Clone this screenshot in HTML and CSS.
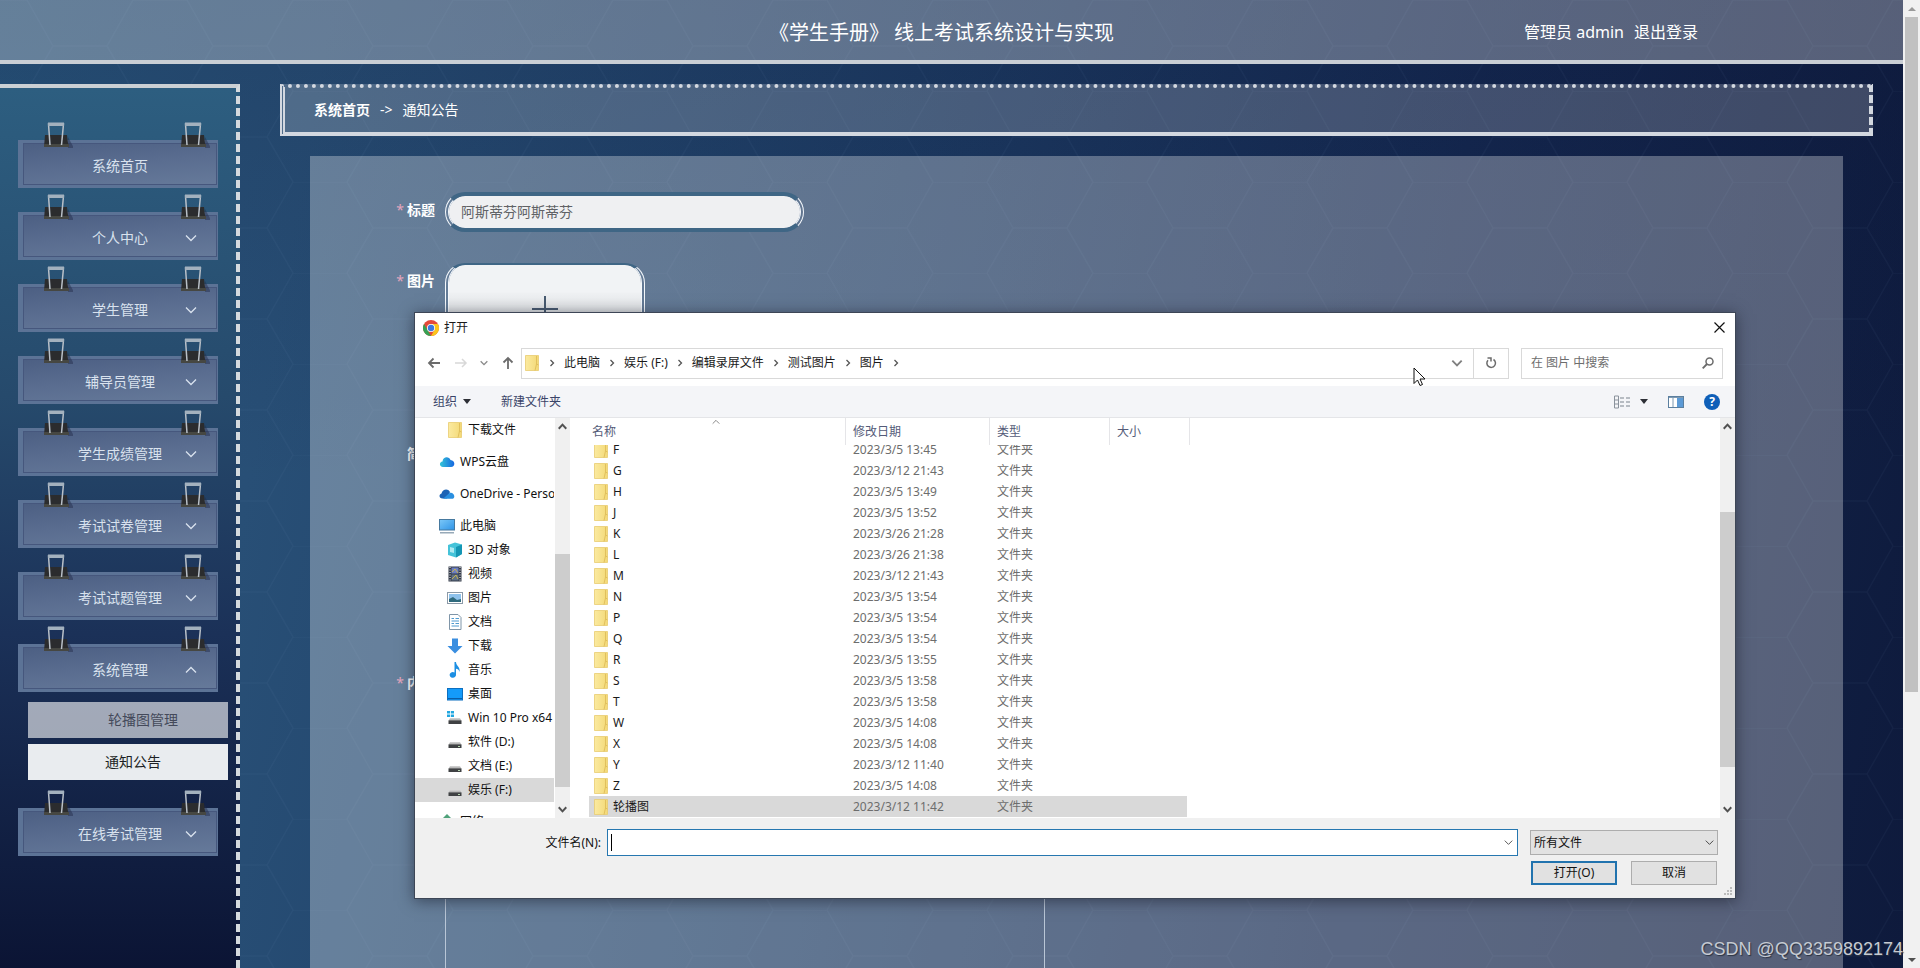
FILE: index.html
```html
<!DOCTYPE html>
<html lang="zh-CN">
<head>
<meta charset="utf-8">
<title>《学生手册》 线上考试系统设计与实现</title>
<link rel="stylesheet" href="styles.css">
</head>
<body>
<svg class="sprite" aria-hidden="true">
  <defs>
    <linearGradient id="g-folder" x1="0" y1="0" x2="1" y2="0"><stop offset="0" stop-color="#fbeaa0"/><stop offset="1" stop-color="#f3d977"/></linearGradient>
    <linearGradient id="g-screen" x1="0" y1="0" x2="1" y2="1"><stop offset="0" stop-color="#7cc8f8"/><stop offset="1" stop-color="#2e93e6"/></linearGradient>
    <linearGradient id="g-cloud" x1="0" y1="0" x2="1" y2="0"><stop offset="0" stop-color="#35c5d8"/><stop offset="1" stop-color="#1667e0"/></linearGradient>
    <linearGradient id="g-drive" x1="0" y1="0" x2="0" y2="1"><stop offset="0" stop-color="#d8d8d8"/><stop offset="1" stop-color="#9a9a9a"/></linearGradient>
    <symbol id="clip" viewBox="0 0 30 28">
      <path d="M25 16 L31 27 H25 Z" fill="#222a48" opacity=".45"/>
      <path d="M2 14 H24 L25.500 26 H1 Z" fill="#2b2c2e"/>
      <path d="M1 23 H26 V26 H1 Z" fill="#464742"/>
      <path d="M7 24 L5.500 3 H20.500 L18.500 24" fill="none" stroke="#b9c0c8" stroke-width="1.500"/>
      <path d="M5 1.500 H21 V5 H5 Z" fill="#a3b1be"/>
    </symbol>
    <symbol id="folder" viewBox="0 0 16 16">
      <path d="M1.500 .5 H14.500 V15.500 H1.500 Z" fill="url(#g-folder)" stroke="#e8cc70" stroke-width=".8"/>
      <path d="M12.500 9 L11 15.500 M12.500 1 V9 L14.500 10" fill="none" stroke="#dcb954" stroke-width=".8"/>
    </symbol>
    <symbol id="wps" viewBox="0 0 16 16"><path d="M4 13 C0 13 0 8 3.500 7.500 C4 2.500 10 2 11.500 6 C16.500 6.500 16.500 13 12 13 Z" fill="url(#g-cloud)"/></symbol>
    <symbol id="onedrive" viewBox="0 0 16 16">
      <path d="M3.500 12.500 C0 12.500 -.5 8.500 2.500 7.500 C3.500 3 9 2 11 6 L8 12.500 Z" fill="#1b62b5"/>
      <path d="M4 12.800 L10.500 7 C15 5.500 17.500 12.800 12.500 12.800 Z" fill="#2a8fe0"/>
    </symbol>
    <symbol id="pc" viewBox="0 0 16 16"><rect x=".5" y="1.500" width="15" height="10.500" fill="url(#g-screen)" stroke="#46799f"/><path d="M1 14.800 H15" stroke="#7d94a6" stroke-width="1.200"/></symbol>
    <symbol id="cube" viewBox="0 0 16 16"><path d="M1 3 L8 .5 L15 2.500 V12 L9 15.500 L1 13 Z" fill="#45c3d9"/><path d="M9 5 L15 2.500 V12 L9 15.500 Z" fill="#1596b4"/><path d="M3 5 L7 6 V11 L3 10 Z" fill="#aeeaf2"/></symbol>
    <symbol id="film" viewBox="0 0 16 16"><rect x="1.500" y=".5" width="13" height="15" fill="#333a48"/><rect x="4.500" y="1.500" width="7" height="6" fill="#6d7fc0"/><rect x="4.500" y="8.500" width="7" height="6" fill="#5f7086"/><path d="M5 6 L8 3 L11 7 M5 13 L9 9 L11 13" stroke="#c6b250" fill="none"/><path d="M3 1 V15 M13 1 V15" stroke="#fff" stroke-width="1" stroke-dasharray="1 1.500"/></symbol>
    <symbol id="image" viewBox="0 0 16 16"><rect x=".5" y="2.500" width="15" height="11" fill="#fff" stroke="#8b9aa8"/><rect x="2" y="4" width="12" height="8" fill="#8ec2ec"/><path d="M2 9 L6 7 L10 10 L14 9 V12 H2 Z" fill="#2f6a7d"/></symbol>
    <symbol id="doc" viewBox="0 0 16 16"><path d="M2.500 .5 H11 L14 3.500 V15.500 H2.500 Z" fill="#fff" stroke="#7f95a8"/><path d="M4.500 4.500 H7 M8.500 4.500 H12 M4.500 7 H12 M4.500 9.500 H7 M8.500 9.500 H12 M4.500 12 H12" stroke="#4e9ad0"/></symbol>
    <symbol id="down" viewBox="0 0 16 16"><path d="M5 .5 H11 V8 H15.500 L8 15.500 L.5 8 H5 Z" fill="#3a8ee0"/></symbol>
    <symbol id="note" viewBox="0 0 16 16"><path d="M7.500 0 H9 C9 4 13.500 4.500 12.500 10 C12 7.500 10.500 7 9 6.800 V12.500 A3.200 2.800 0 1 1 7.500 10.500 Z" fill="#1c8fe3"/></symbol>
    <symbol id="desk" viewBox="0 0 16 16"><rect x=".5" y="2.500" width="15" height="11.500" fill="#149bfa" stroke="#0c6fc0"/><path d="M1 12.500 H15" stroke="#0b5ea8"/></symbol>
    <symbol id="drive" viewBox="0 0 16 16"><path d="M3 8 H13 L14.500 11 H1.500 Z" fill="url(#g-drive)"/><rect x="1.500" y="10.500" width="13" height="3.500" fill="#3f4143"/><rect x="11" y="12" width="2" height="1" fill="#b8d8b0"/></symbol>
    <symbol id="win" viewBox="0 0 16 16"><path d="M0 1 H3 V3.500 H0 Z M3.800 1 H7 V3.500 H3.800 Z M0 4.500 H3 V7 H0 Z M3.800 4.500 H7 V7 H3.800 Z" fill="#22a7e0"/><path d="M3 8 H13 L14.500 11 H1.500 Z" fill="url(#g-drive)"/><rect x="1.500" y="10.500" width="13" height="3.500" fill="#3f4143"/></symbol>
    <symbol id="net" viewBox="0 0 16 16"><path d="M8 0 L13 5 H3 Z" fill="#4fa27a"/><rect x="1" y="5" width="14" height="9" fill="#4a9ad8"/></symbol>
    <symbol id="chev-down" viewBox="0 0 12 12"><path d="M1 3.500 L6 8.500 L11 3.500" fill="none" stroke="currentColor" stroke-width="1.300"/></symbol>
    <symbol id="chev-up" viewBox="0 0 12 12"><path d="M1 8.500 L6 3.500 L11 8.500" fill="none" stroke="currentColor" stroke-width="1.300"/></symbol>
    <symbol id="bold-down" viewBox="0 0 12 12"><path d="M1 3 L6 8.500 L11 3" fill="none" stroke="currentColor" stroke-width="2.600"/></symbol>
    <symbol id="bold-up" viewBox="0 0 12 12"><path d="M1 9 L6 3.500 L11 9" fill="none" stroke="currentColor" stroke-width="2.600"/></symbol>
    <symbol id="chev-right" viewBox="0 0 12 12"><path d="M4.500 3 L7.500 6 L4.500 9" fill="none" stroke="currentColor" stroke-width="1.300"/></symbol>
    <pattern id="hex" width="160" height="91" patternUnits="userSpaceOnUse">
      <path d="M53 46 H107 L133 0 H160 M107 46 L133 91 M53 46 L27 0 H0 M53 46 L27 91" fill="none" stroke="#9fc0e8" stroke-width="1.500"/>
    </pattern>
  </defs>
</svg>

<div class="page">
  <svg class="hexes" aria-hidden="true"><rect width="100%" height="100%" fill="url(#hex)"/></svg>

  <header class="topbar">
    <h1 class="topbar-title">《学生手册》 线上考试系统设计与实现</h1>
    <div class="topbar-user"><span>管理员 admin</span><a class="logout" href="#">退出登录</a></div>
  </header>

  <div class="layout">
    <nav class="sidebar">
      <button class="menu-item"><svg class="clip clip-left"><use href="#clip"/></svg><svg class="clip clip-right"><use href="#clip"/></svg>系统首页</button>
      <button class="menu-item"><svg class="clip clip-left"><use href="#clip"/></svg><svg class="clip clip-right"><use href="#clip"/></svg>个人中心<svg class="caret"><use href="#chev-down"/></svg></button>
      <button class="menu-item"><svg class="clip clip-left"><use href="#clip"/></svg><svg class="clip clip-right"><use href="#clip"/></svg>学生管理<svg class="caret"><use href="#chev-down"/></svg></button>
      <button class="menu-item"><svg class="clip clip-left"><use href="#clip"/></svg><svg class="clip clip-right"><use href="#clip"/></svg>辅导员管理<svg class="caret"><use href="#chev-down"/></svg></button>
      <button class="menu-item"><svg class="clip clip-left"><use href="#clip"/></svg><svg class="clip clip-right"><use href="#clip"/></svg>学生成绩管理<svg class="caret"><use href="#chev-down"/></svg></button>
      <button class="menu-item"><svg class="clip clip-left"><use href="#clip"/></svg><svg class="clip clip-right"><use href="#clip"/></svg>考试试卷管理<svg class="caret"><use href="#chev-down"/></svg></button>
      <button class="menu-item"><svg class="clip clip-left"><use href="#clip"/></svg><svg class="clip clip-right"><use href="#clip"/></svg>考试试题管理<svg class="caret"><use href="#chev-down"/></svg></button>
      <button class="menu-item"><svg class="clip clip-left"><use href="#clip"/></svg><svg class="clip clip-right"><use href="#clip"/></svg>系统管理<svg class="caret"><use href="#chev-up"/></svg></button>
      <div class="submenu">
        <a class="submenu-item" href="#">轮播图管理</a>
        <a class="submenu-item is-active" href="#">通知公告</a>
      </div>
      <button class="menu-item"><svg class="clip clip-left"><use href="#clip"/></svg><svg class="clip clip-right"><use href="#clip"/></svg>在线考试管理<svg class="caret"><use href="#chev-down"/></svg></button>
    </nav>

    <main class="content">
      <div class="crumbs"><a class="crumb-home" href="#">系统首页</a><span>-&gt;</span><span>通知公告</span></div>
      <form class="panel">
        <div class="row"><label class="row-label is-required" for="title">标题</label><input class="title-input" id="title" type="text" value="阿斯蒂芬阿斯蒂芬"></div>
        <div class="row row-image"><span class="row-label is-required">图片</span><button class="upload" type="button" aria-label="上传图片"><svg class="plus" viewBox="0 0 28 28"><path d="M14 1 V27 M1 14 H27" stroke="#475a70" stroke-width="2"/></svg></button></div>
        <div class="row row-brief"><span class="row-label">简介</span></div>
        <div class="row row-body"><span class="row-label is-required">内容</span><div class="editor"></div></div>
      </form>
    </main>
  </div>
</div>

<div class="page-scroll"><span class="arrow arrow-up"></span><span class="page-thumb"></span><span class="arrow arrow-down"></span></div>

<section class="dialog">
  <div class="titlebar">
    <svg class="chrome" viewBox="0 0 16 16"><circle cx="8" cy="8" r="8" fill="#e5493a"/><path d="M1.070 4 L4.540 10 L8 16 A8 8 0 0 1 1.070 4 Z" fill="#35a154"/><path d="M8 16 L11.460 10 L8 4 H14.930 A8 8 0 0 1 8 16 Z" fill="#fbc51c"/><circle cx="8" cy="8" r="4" fill="#fff"/><circle cx="8" cy="8" r="3.200" fill="#3c78e0"/></svg>
    <span>打开</span>
    <button class="close" aria-label="关闭"><svg class="ico11" viewBox="0 0 11 11"><path d="M.5 .5 L10.500 10.500 M10.500 .5 L.5 10.500" stroke="#111" stroke-width="1.200"/></svg></button>
  </div>

  <div class="addressrow">
    <div class="history">
      <svg class="ico14" viewBox="0 0 14 14"><path d="M13 7 H2 M6.500 2.500 L2 7 L6.500 11.500" fill="none" stroke="#6b6b6b" stroke-width="1.800"/></svg>
      <svg class="ico14" viewBox="0 0 14 14"><path d="M1 7 H12 M8 3 L12 7 L8 11" fill="none" stroke="#d8d8d8" stroke-width="1.500"/></svg>
      <svg class="ico8" viewBox="0 0 12 12"><path d="M1 3.500 L6 8.500 L11 3.500" fill="none" stroke="#8a8a8a" stroke-width="2"/></svg>
      <svg class="ico14" viewBox="0 0 14 14"><path d="M7 13 V2 M2.500 6.500 L7 2 L11.500 6.500" fill="none" stroke="#6b6b6b" stroke-width="1.800"/></svg>
    </div>
    <div class="address">
      <svg class="ico16"><use href="#folder"/></svg>
      <svg class="sep"><use href="#chev-right"/></svg><span>此电脑</span>
      <svg class="sep"><use href="#chev-right"/></svg><span>娱乐 (F:)</span>
      <svg class="sep"><use href="#chev-right"/></svg><span>编辑录屏文件</span>
      <svg class="sep"><use href="#chev-right"/></svg><span>测试图片</span>
      <svg class="sep"><use href="#chev-right"/></svg><span>图片</span>
      <svg class="sep"><use href="#chev-right"/></svg>
      <svg class="address-drop" viewBox="0 0 12 12"><path d="M2 4 L6 8 L10 4" fill="none" stroke="#808080" stroke-width="1.600"/></svg>
      <button class="refresh" aria-label="刷新"><svg class="ico12" viewBox="0 0 12 12"><path d="M8.500 2.500 A4.300 4.300 0 1 1 3 3.200" fill="none" stroke="#6b6b6b" stroke-width="1.500"/><path d="M2.500 1 H6 V4.500" fill="none" stroke="#6b6b6b" stroke-width="1.500"/></svg></button>
    </div>
    <div class="search">
      <input class="search-input" type="text" placeholder="在 图片 中搜索" aria-label="搜索">
      <svg class="ico12" viewBox="0 0 12 12"><circle cx="7.500" cy="4.500" r="3.500" fill="none" stroke="#6b6b6b" stroke-width="1.500"/><path d="M5 7 L.7 11.300" stroke="#6b6b6b" stroke-width="1.800"/></svg>
    </div>
  </div>

  <div class="toolbar">
    <button class="tool">组织<span class="tri"></span></button>
    <button class="tool">新建文件夹</button>
    <div class="tool-right">
      <button class="tool tool-view" aria-label="视图"><svg class="ico16" viewBox="0 0 16 14"><path d="M.5 1 H4.500 V13 H.5 Z M.5 5 H4.500 M.5 9 H4.500" fill="none" stroke="#8a929c"/><path d="M6 3 H10 M12 3 H16 M6 7 H10 M12 7 H16 M6 11 H10 M12 11 H16" stroke="#7b838d"/></svg><span class="tri"></span></button>
      <button class="tool" aria-label="预览窗格"><svg class="ico16" viewBox="0 0 16 14"><rect x=".5" y="1.500" width="15" height="11" fill="#fff" stroke="#5b7f9f"/><rect x="9" y="2" width="6" height="10" fill="#5c9ad6"/><path d="M1 2.500 H15 M5 2 V12" stroke="#7f9ab2"/></svg></button>
      <button class="help" aria-label="帮助">?</button>
    </div>
  </div>

  <div class="browser">
    <ul class="tree">
      <li class="leaf child"><svg class="ico16"><use href="#folder"/></svg>下载文件</li>
      <li class="leaf root"><svg class="ico16"><use href="#wps"/></svg>WPS云盘</li>
      <li class="leaf root"><svg class="ico16"><use href="#onedrive"/></svg>OneDrive - Personal</li>
      <li class="leaf root"><svg class="ico16"><use href="#pc"/></svg>此电脑</li>
      <li class="leaf child"><svg class="ico16"><use href="#cube"/></svg>3D 对象</li>
      <li class="leaf child"><svg class="ico16"><use href="#film"/></svg>视频</li>
      <li class="leaf child"><svg class="ico16"><use href="#image"/></svg>图片</li>
      <li class="leaf child"><svg class="ico16"><use href="#doc"/></svg>文档</li>
      <li class="leaf child"><svg class="ico16"><use href="#down"/></svg>下载</li>
      <li class="leaf child"><svg class="ico16"><use href="#note"/></svg>音乐</li>
      <li class="leaf child"><svg class="ico16"><use href="#desk"/></svg>桌面</li>
      <li class="leaf child"><svg class="ico16"><use href="#win"/></svg>Win 10 Pro x64 (C:)</li>
      <li class="leaf child"><svg class="ico16"><use href="#drive"/></svg>软件 (D:)</li>
      <li class="leaf child"><svg class="ico16"><use href="#drive"/></svg>文档 (E:)</li>
      <li class="leaf child is-selected"><svg class="ico16"><use href="#drive"/></svg>娱乐 (F:)</li>
      <li class="leaf root"><svg class="ico16"><use href="#net"/></svg>网络</li>
    </ul>
    <div class="scroll"><svg class="scroll-arrow"><use href="#bold-up"/></svg><span class="tree-thumb"></span><svg class="scroll-arrow"><use href="#bold-down"/></svg></div>

    <table class="files">
      <thead><tr><th>名称<svg class="sort"><use href="#chev-up"/></svg></th><th>修改日期</th><th>类型</th><th>大小</th></tr></thead>
      <tbody>
        <tr><td><svg class="ico16"><use href="#folder"/></svg>F</td><td>2023/3/5 13:45</td><td>文件夹</td><td></td></tr>
        <tr><td><svg class="ico16"><use href="#folder"/></svg>G</td><td>2023/3/12 21:43</td><td>文件夹</td><td></td></tr>
        <tr><td><svg class="ico16"><use href="#folder"/></svg>H</td><td>2023/3/5 13:49</td><td>文件夹</td><td></td></tr>
        <tr><td><svg class="ico16"><use href="#folder"/></svg>J</td><td>2023/3/5 13:52</td><td>文件夹</td><td></td></tr>
        <tr><td><svg class="ico16"><use href="#folder"/></svg>K</td><td>2023/3/26 21:28</td><td>文件夹</td><td></td></tr>
        <tr><td><svg class="ico16"><use href="#folder"/></svg>L</td><td>2023/3/26 21:38</td><td>文件夹</td><td></td></tr>
        <tr><td><svg class="ico16"><use href="#folder"/></svg>M</td><td>2023/3/12 21:43</td><td>文件夹</td><td></td></tr>
        <tr><td><svg class="ico16"><use href="#folder"/></svg>N</td><td>2023/3/5 13:54</td><td>文件夹</td><td></td></tr>
        <tr><td><svg class="ico16"><use href="#folder"/></svg>P</td><td>2023/3/5 13:54</td><td>文件夹</td><td></td></tr>
        <tr><td><svg class="ico16"><use href="#folder"/></svg>Q</td><td>2023/3/5 13:54</td><td>文件夹</td><td></td></tr>
        <tr><td><svg class="ico16"><use href="#folder"/></svg>R</td><td>2023/3/5 13:55</td><td>文件夹</td><td></td></tr>
        <tr><td><svg class="ico16"><use href="#folder"/></svg>S</td><td>2023/3/5 13:58</td><td>文件夹</td><td></td></tr>
        <tr><td><svg class="ico16"><use href="#folder"/></svg>T</td><td>2023/3/5 13:58</td><td>文件夹</td><td></td></tr>
        <tr><td><svg class="ico16"><use href="#folder"/></svg>W</td><td>2023/3/5 14:08</td><td>文件夹</td><td></td></tr>
        <tr><td><svg class="ico16"><use href="#folder"/></svg>X</td><td>2023/3/5 14:08</td><td>文件夹</td><td></td></tr>
        <tr><td><svg class="ico16"><use href="#folder"/></svg>Y</td><td>2023/3/12 11:40</td><td>文件夹</td><td></td></tr>
        <tr><td><svg class="ico16"><use href="#folder"/></svg>Z</td><td>2023/3/5 14:08</td><td>文件夹</td><td></td></tr>
        <tr class="is-selected"><td><svg class="ico16"><use href="#folder"/></svg>轮播图</td><td>2023/3/12 11:42</td><td>文件夹</td><td></td></tr>
      </tbody>
    </table>
    <div class="scroll"><svg class="scroll-arrow"><use href="#bold-up"/></svg><span class="list-thumb"></span><svg class="scroll-arrow"><use href="#bold-down"/></svg></div>
  </div>

  <div class="footer">
    <div class="footer-row">
      <label class="name-label" for="filename">文件名(N):</label>
      <div class="name-box"><input class="name-input" id="filename" type="text"><span class="text-caret"></span><svg class="ico9"><use href="#chev-down"/></svg></div>
      <div class="type-box"><select class="type-select" aria-label="文件类型"><option>所有文件</option></select><svg class="ico9 type-caret"><use href="#chev-down"/></svg></div>
    </div>
    <div class="footer-row footer-actions"><button class="btn btn-primary">打开(O)</button><button class="btn">取消</button></div>
    <svg class="grip" viewBox="0 0 9 9"><path d="M6 0 H8 V2 H6 Z M3 3 H5 V5 H3 Z M6 3 H8 V5 H6 Z M0 6 H2 V8 H0 Z M3 6 H5 V8 H3 Z M6 6 H8 V8 H6 Z" fill="#bcbcbc"/></svg>
  </div>
</section>

<svg class="pointer" viewBox="0 0 13 20"><path d="M1 1 V16.500 L4.500 13 L7 18.500 L9.500 17.500 L7 12 H12 Z" fill="#fff" stroke="#111"/></svg>
<div class="watermark">CSDN @QQ3359892174</div>
</body>
</html>
```
FILE: styles.css
```css
* { box-sizing: border-box; }

body {
  margin: 0;
  height: 100vh;
  display: flex;
  overflow: hidden;
  position: relative;
  font: 14px/20px "Noto Sans", "Noto Sans CJK SC", sans-serif;
  color: #fff;
}

button, input, select { font: inherit; color: inherit; margin: 0; padding: 0; border: 0; background: none; border-radius: 0; outline: 0; }
a { color: inherit; text-decoration: none; }
svg { flex: none; display: block; }

.sprite { position: absolute; width: 0; height: 0; }

/* page */
.page {
  flex: 1;
  min-width: 0;
  display: flex;
  flex-direction: column;
  position: relative;
  overflow: hidden;
  background:
    linear-gradient(180deg, rgba(10, 16, 48, .18) 0%, rgba(10, 16, 48, 0) 50%),
    linear-gradient(100deg, #28557c 0%, #284f76 16%, #1d3c64 45%, #142850 72%, #0e1a3c 100%);
}
.hexes { position: absolute; inset: 0; width: 100%; height: 100%; opacity: .04; }

.topbar {
  position: relative;
  display: flex;
  align-items: center;
  justify-content: center;
  height: 64px;
  padding-top: 6px;
  border-bottom: 4px solid #cacfd5;
  background: rgba(255, 255, 255, .3);
}
.topbar-title { margin: 0; padding-right: 20px; font-size: 20px; line-height: 28px; font-weight: 400; }
.topbar-user { position: absolute; right: 205px; top: 20px; display: flex; gap: 10px; font-size: 16px; line-height: 24px; }

.layout { position: relative; flex: 1; min-height: 0; display: flex; padding-top: 20px; }

.sidebar {
  width: 240px;
  display: flex;
  flex-direction: column;
  padding: 52px 18px 0;
  border-top: 4px solid #cbd0d4;
  border-right: 4px dashed #d5dade;
  background: linear-gradient(180deg, #2d5e80 0%, #264a6c 35%, #1b3158 62%, #0b1434 100%);
}
.menu-item {
  position: relative;
  width: 200px;
  height: 48px;
  margin-bottom: 24px;
  padding-top: 4px;
  text-align: center;
  color: #d9e2ee;
  background: linear-gradient(175deg, #4c5f83 0%, #5a6d90 50%, #667a9a 100%);
  border: solid #5c7396;
  border-width: 3px 1px 3px 5px;
  box-shadow: inset 0 0 0 1px #46577d;
}
.clip { position: absolute; top: -22px; width: 30px; height: 28px; }
.clip-left { left: 20px; }
.clip-right { left: 157px; }
.caret { position: absolute; top: 17px; left: 162px; width: 12px; height: 12px; }

.submenu { display: flex; flex-direction: column; gap: 6px; width: 200px; margin: -14px 0 28px 10px; }
.submenu-item { height: 36px; padding: 8px 0 8px 30px; text-align: center; line-height: 20px; background: rgba(255, 255, 255, .6); color: #44495a; }
.submenu-item.is-active { padding-left: 10px; background: #e9ecef; color: #1d1f24; }

.content { flex: 1; min-width: 0; display: flex; flex-direction: column; padding: 0 30px 0 40px; }
.crumbs {
  display: flex;
  align-items: center;
  gap: 10px;
  height: 52px;
  padding-left: 29px;
  background: rgba(255, 255, 255, .2);
  border-style: dotted dashed solid double;
  border-width: 4px 4px 4px 5px;
  border-color: #d3d8e0;
}
.crumb-home { font-weight: 700; }

.panel {
  flex: 1;
  display: flex;
  flex-direction: column;
  gap: 31px;
  margin: 20px 30px 0;
  padding-top: 36px;
  background: rgba(255, 255, 255, .3);
}
.row { display: flex; min-height: 40px; }
.row-image { height: 142px; }
.row-brief { height: 198px; }
.row-body { flex: 1; }
.row-label { width: 135px; padding-right: 10px; line-height: 36px; font-weight: 700; text-align: right; }
.is-required::before { content: "*"; margin-right: 3px; font-weight: 400; color: #e3a6be; }
.title-input {
  width: 359px;
  height: 40px;
  padding: 0 12px 2px;
  border-style: solid double;
  border-width: 4px 4px;
  border-color: #3f6685 #f4f8fc;
  border-radius: 20px;
  background: #eff0f2;
  background-clip: padding-box;
  color: #606266;
}
.upload {
  display: flex;
  align-items: center;
  justify-content: center;
  width: 200px;
  height: 92px;
  border-style: solid double;
  border-width: 2px 4px;
  border-color: #3f6685 #f4f8fc;
  border-radius: 20px;
  background: linear-gradient(180deg, #f1f3f5 30%, #d9dcdf 60%);
  background-clip: padding-box;
}
.plus { width: 28px; height: 28px; }
.editor { width: 600px; border: solid #b9c6d6; border-width: 1px 1px 0; }

/* page scrollbar */
.page-scroll { width: 17px; display: flex; flex-direction: column; align-items: center; background: #f1f1f1; }
.page-thumb { width: 13px; height: 675px; background: #c1c1c1; }
.arrow { width: 17px; height: 17px; display: grid; place-items: center; }
.arrow::before { content: ""; border: 4px solid transparent; }
.arrow-up::before { border-bottom-color: #9a9a9a; border-top: 0; }
.arrow-down { margin-top: auto; }
.arrow-down::before { border-top-color: #505050; border-bottom: 0; }

/* file dialog */
.dialog {
  position: absolute;
  left: 414px;
  top: 312px;
  width: 1322px;
  display: flex;
  flex-direction: column;
  border: 1px solid #3d4656;
  background: #fff;
  color: #1a1a1a;
  font-size: 12px;
  line-height: 16px;
  box-shadow: 0 2px 14px rgba(20, 24, 36, .55);
}
.ico8 { width: 8px; height: 8px; }
.ico9 { width: 9px; height: 9px; }
.ico11 { width: 11px; height: 11px; }
.ico12 { width: 12px; height: 12px; }
.ico14 { width: 14px; height: 14px; }
.ico16 { width: 16px; height: 16px; }

.titlebar { display: flex; align-items: center; gap: 5px; height: 29px; padding: 0 10px 0 8px; }
.chrome { width: 16px; height: 16px; }
.close { margin-left: auto; }

.addressrow { display: flex; align-items: center; gap: 6px; height: 44px; padding: 6px 12px 8px; }
.history { display: flex; align-items: center; justify-content: space-between; width: 88px; }
.address { flex: 1; display: flex; align-items: center; gap: 6px; height: 31px; margin-right: 6px; padding-left: 2px; border: 1px solid #d9d9d9; }
.sep { width: 12px; height: 12px; color: #555; }
.address-drop { width: 14px; height: 14px; margin-left: auto; }
.refresh { display: grid; place-items: center; width: 35px; height: 29px; margin-left: 3px; border-left: 1px solid #d9d9d9; }
.search { display: flex; align-items: center; width: 202px; height: 31px; padding: 0 8px 0 9px; border: 1px solid #d9d9d9; }
.search-input { flex: 1; min-width: 0; }
.search-input::placeholder { color: #6d6d6d; opacity: 1; }

.toolbar { display: flex; align-items: center; gap: 30px; height: 32px; padding: 0 15px 0 18px; background: #f4f5f8; border-bottom: 1px solid #e4e5e8; color: #3a4468; }
.tool { display: flex; align-items: center; gap: 6px; }
.tool-view { gap: 10px; }
.tri { border: 4px solid transparent; border-top: 5px solid #2d2f36; border-bottom: 0; }
.tool-right { display: flex; align-items: center; gap: 20px; margin-left: auto; }
.help { width: 16px; height: 16px; border-radius: 8px; background: #0f5fb8; color: #fff; font-weight: 700; line-height: 16px; text-align: center; }

.browser { display: flex; height: 400px; }
.tree { width: 140px; margin: 0; padding: 0; list-style: none; overflow: hidden; color: #111; }
.leaf { display: flex; align-items: center; height: 24px; white-space: nowrap; width: 139px; overflow: hidden; }
.child { gap: 5px; padding-left: 32px; }
.root { gap: 5px; margin-top: 8px; padding-left: 24px; }
.is-selected { background: #d9d9d9; }
.scroll { width: 15px; display: flex; flex-direction: column; background: #f0f0f0; color: #505050; }
.scroll-arrow { width: 9px; height: 17px; margin: 0 3px; }
.tree-thumb { height: 233px; margin: 119px 0 auto; background: #cdcdcd; }
.list-thumb { height: 255px; margin: 77px 0 auto; background: #cdcdcd; }

.files { flex: 1; min-width: 0; display: flex; flex-direction: column; border-collapse: collapse; padding-left: 19px; }
.files thead { display: block; }
.files tbody { flex: 1; min-height: 0; display: flex; flex-direction: column; justify-content: flex-end; overflow: hidden; padding-bottom: 1px; }
.files tr { flex: none; display: grid; grid-template-columns: 257px 144px 120px 80px; width: 601px; height: 21px; }
.files tbody tr { width: 598px; }
.files thead tr { height: 27px; }
.files th { position: relative; display: flex; align-items: center; padding: 0 0 0 7px; border-right: 1px solid #e5e5e8; font-weight: 400; color: #545b78; }
.files th:first-child { padding-left: 3px; }
.files td { display: flex; align-items: center; padding: 0 0 0 7px; color: #6d6d6d; }
.files td:first-child { gap: 4px; padding-left: 4px; color: #1a1a1a; }
.sort { position: absolute; top: 0; left: 123px; width: 8px; height: 8px; color: #777; }

.footer { position: relative; height: 80px; padding: 11px 17px 0; background: #f0f0f0; color: #111; }
.footer-row { display: flex; align-items: center; justify-content: flex-end; gap: 12px; }
.name-label { margin-right: -6px; }
.name-box { display: flex; align-items: center; width: 911px; height: 27px; padding: 0 4px; border: 1px solid #2677b0; background: #fff; position: relative; color: #555; }
.name-input { flex: 1; }
.text-caret { position: absolute; left: 3px; width: 1px; height: 17px; background: #000; }
.type-box { position: relative; width: 188px; }
.type-select { width: 100%; height: 25px; padding-left: 3px; border: 1px solid #adadad; background: #e2e2e2; appearance: none; }
.type-caret { position: absolute; right: 4px; top: 8px; color: #444; }
.footer-actions { gap: 14px; margin-top: 5px; padding-right: 1px; }
.btn { width: 86px; height: 24px; border: 1px solid #adadad; background: #e1e1e1; }
.btn-primary { border: 2px solid #2173ae; }
.grip { position: absolute; right: 2px; bottom: 2px; width: 9px; height: 9px; }

.pointer { position: absolute; left: 1413px; top: 367px; width: 13px; height: 20px; }
.watermark { position: absolute; right: 17px; bottom: 8px; font: 18px/22px "Liberation Sans", sans-serif; color: #c5cad2; text-shadow: 1px 1px 1px #2c3444; }
```
